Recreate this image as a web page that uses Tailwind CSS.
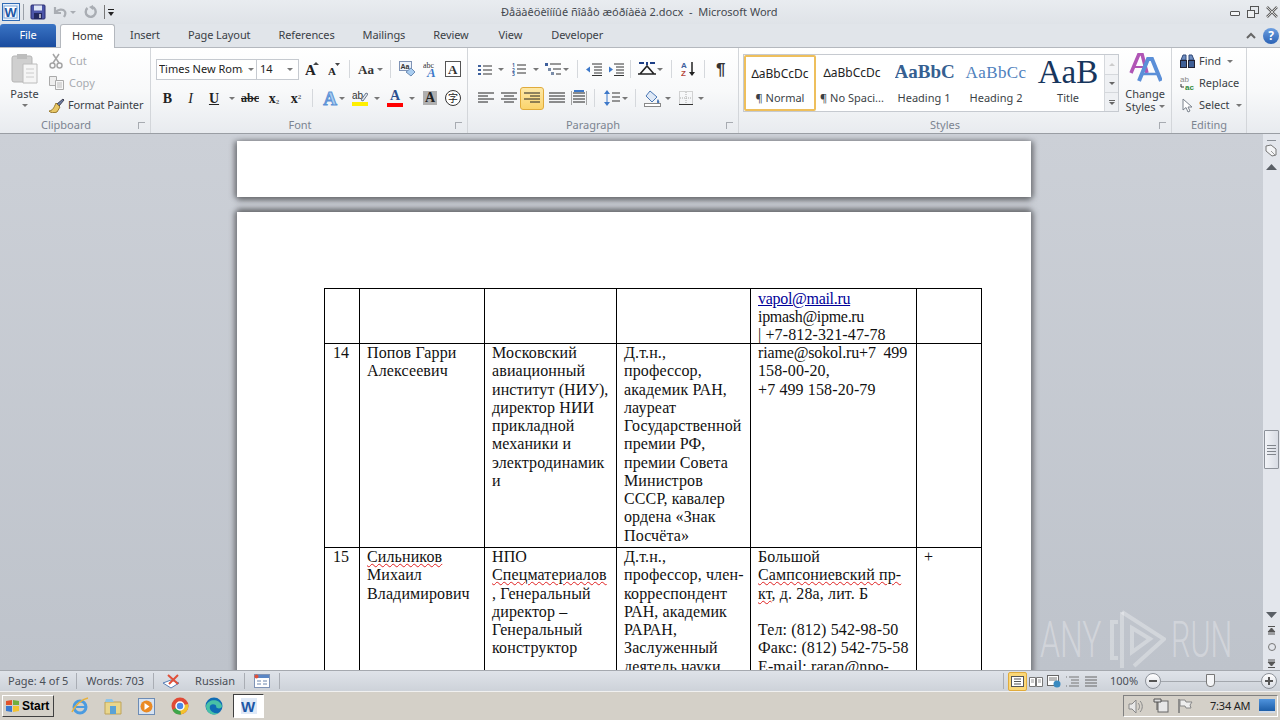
<!DOCTYPE html>
<html lang="ru">
<head>
<meta charset="UTF-8">
<title>Microsoft Word</title>
<script src="https://cdn.jsdelivr.net/npm/@tailwindcss/browser@4"></script>
</head>
<body class="w-[1280px] h-[720px] overflow-hidden bg-[#d4d0c8] font-['Noto_Sans',sans-serif] text-[11px] text-[#3b3f46] relative">

<!-- title bar -->
<div class="h-[24px] flex items-center bg-gradient-to-b from-[#e9ecf0] to-[#dfe3e8] relative">
  <svg class="ml-[2px]" width="18" height="18" viewBox="0 0 18 18"><rect x=".5" y=".5" width="17" height="17" fill="#e8f1fb" stroke="#2f6bb5"/><rect x="2" y="3" width="13" height="12" fill="#fff" stroke="#7aa5d8"/><text x="2.5" y="14" font-family="Liberation Sans" font-size="13" font-weight="700" fill="#1d57a6">W</text></svg>
  <div class="w-px h-[16px] bg-[#9aa0a8] ml-[3px]"></div>
  <svg class="ml-[6px]" width="16" height="16" viewBox="0 0 16 16"><rect x="1" y="1" width="14" height="14" rx="1" fill="#4c55a8" stroke="#2c2f70"/><rect x="4" y="1.5" width="8" height="5" fill="#dfe6f5"/><rect x="4" y="9" width="8" height="6" fill="#23285e"/><rect x="9" y="10" width="2" height="4" fill="#aab"/></svg>
  <svg class="ml-[6px]" width="16" height="14" viewBox="0 0 16 14"><path d="M3 2v6h6M3.5 7.500C6 4 11 3.500 13 6.500c1 2 0 4-1 5.500" fill="none" stroke="#a9adb3" stroke-width="2.200"/></svg>
  <span class="ml-[2px] w-0 h-0 border-x-[3px] border-x-transparent border-t-[3px] border-t-[#a9adb3]"></span>
  <svg class="ml-[8px]" width="14" height="14" viewBox="0 0 14 14"><path d="M3.500 3A5 5 0 1 0 8 2" fill="none" stroke="#a9adb3" stroke-width="2.400"/><path d="M9 0v5L5 2z" fill="#a9adb3"/></svg>
  <div class="w-px h-[14px] bg-[#777] ml-[6px]"></div>
  <div class="ml-[3px] flex flex-col items-center gap-[2px]"><span class="w-[6px] h-px bg-[#222]"></span><span class="w-0 h-0 border-x-[3px] border-x-transparent border-t-[4px] border-t-[#222]"></span></div>
  <div class="absolute left-[501px] top-[4px] text-[11px] text-[#44484f] whitespace-pre">Ðåäàêöèîííûé ñîâåò æóðíàëà 2.docx  -  Microsoft Word</div>
  <div class="ml-auto mr-[2px] flex items-center gap-[7px]">
    <span class="w-[10px] h-[5px] mt-[3px] border border-[#555] rounded-[1px] bg-white/60"></span>
    <svg width="12" height="12" viewBox="0 0 12 12"><rect x="3.500" y=".5" width="8" height="7" fill="none" stroke="#555"/><rect x=".5" y="4.500" width="7" height="7" fill="#eef0f2" stroke="#555"/></svg>
    <svg width="12" height="12" viewBox="0 0 12 12"><path d="M1 1l10 10M11 1L1 11" stroke="#666" stroke-width="2.500"/><path d="M1 1l10 10M11 1L1 11" stroke="#eee" stroke-width=".8"/></svg>
  </div>
</div>

<!-- tabs -->
<div class="h-[24px] flex items-end bg-[#e1e5ea] border-b border-[#b4b8be] text-[11px] tracking-[-0.1px] relative">
  <div class="w-[56px] h-[23px] bg-gradient-to-b from-[#3a74c4] to-[#1a4c9f] rounded-t-[3px] text-white flex items-center justify-center">File</div>
  <div class="ml-[4px] w-[55px] h-[24px] -mb-px bg-white border border-b-0 border-[#b4b8be] rounded-t-[3px] flex items-center justify-center text-[#333]">Home</div>
  <div class="ml-[15px] h-[23px] flex items-center">Insert</div>
  <div class="ml-[28px] h-[23px] flex items-center">Page Layout</div>
  <div class="ml-[28px] h-[23px] flex items-center">References</div>
  <div class="ml-[28px] h-[23px] flex items-center">Mailings</div>
  <div class="ml-[28px] h-[23px] flex items-center">Review</div>
  <div class="ml-[30px] h-[23px] flex items-center">View</div>
  <div class="ml-[29px] h-[23px] flex items-center">Developer</div>
  <div class="ml-auto mr-[1px] h-[23px] flex items-center gap-[7px]">
    <svg width="10" height="8" viewBox="0 0 10 8"><path d="M1 6l4-4 4 4" fill="none" stroke="#666" stroke-width="2"/></svg>
    <span class="w-[16px] h-[16px] rounded-full bg-gradient-to-b from-[#6d9fe0] to-[#2a62b5] text-white text-[12px] font-bold flex items-center justify-center">?</span>
  </div>
</div>

<!-- ribbon -->
<div class="h-[86px] flex bg-gradient-to-b from-white via-[#f8f9fa] to-[#e8ebef] border-b border-[#9a9ea4] shadow-[0_1px_2px_#888]">

  <!-- clipboard -->
  <div class="w-[151px] shrink-0 border-r border-[#d3d6da] flex flex-col">
    <div class="h-[70px] flex">
      <div class="w-[49px] flex flex-col items-center pt-[5px]">
        <svg width="28" height="31" viewBox="0 0 28 31"><rect x="1" y="3" width="20" height="26" rx="2" fill="#cfcfcf" stroke="#b5b5b5"/><rect x="6" y="1" width="10" height="5" fill="#bdbdbd"/><path d="M12 11h14v19H12z" fill="#f5f5f5" stroke="#bcbcbc"/><path d="M15 16h8M15 20h8M15 24h8" stroke="#ccc"/></svg>
        <span class="mt-[3px] leading-[14px]">Paste</span>
        <span class="mt-[3px] w-0 h-0 border-x-[3px] border-x-transparent border-t-[3px] border-t-[#777]"></span>
      </div>
      <div class="flex flex-col pt-[2px]">
        <div class="h-[22px] flex items-center gap-[6px] text-[#a8abb0]"><svg width="14" height="16" viewBox="0 0 14 16"><path d="M4 1l6 9M10 1L4 10" stroke="#a5a5a5" stroke-width="1.500"/><circle cx="3.500" cy="12.500" r="2.500" fill="none" stroke="#a5a5a5" stroke-width="1.500"/><circle cx="10.500" cy="12.500" r="2.500" fill="none" stroke="#a5a5a5" stroke-width="1.500"/></svg>Cut</div>
        <div class="h-[22px] flex items-center gap-[5px] text-[#a8abb0]"><svg width="15" height="14" viewBox="0 0 15 14"><path d="M.5.5h7v9h-7z" fill="#eee" stroke="#aaa"/><path d="M6.500 4.500h8v9h-8z" fill="#f7f7f7" stroke="#aaa"/><path d="M8 7h5M8 9h5M8 11h5" stroke="#bbb"/></svg>Copy</div>
        <div class="h-[22px] flex items-center gap-[3px] -ml-[1px] tracking-[-0.15px]"><svg width="17" height="15" viewBox="0 0 17 15"><path d="M9 6L15 1l1 1-5 6z" fill="#6c7fa8" stroke="#445"/><path d="M8 5l4 4-3 5c-2 1-7 1-8-1 3 0 5-3 7-8z" fill="#e8c766" stroke="#97782c"/></svg>Format Painter</div>
      </div>
    </div>
    <div class="flex-1 flex items-center justify-center pr-[18px] relative text-[#7b8490]">Clipboard<span class="absolute right-[5px] top-[5px] w-[7px] h-[7px] border-l border-b border-[#a7abb1] rotate-90"></span></div>
  </div>

  <!-- font -->
  <div class="w-[317px] shrink-0 border-r border-[#d3d6da] flex flex-col">
    <div class="h-[70px] pl-[5px] pt-[10px] flex flex-col">
      <div class="h-[22px] flex items-center">
        <div class="w-[101px] h-[21px] bg-white border border-[#c6cad0] flex items-center pl-[2px] overflow-hidden"><span class="w-[84px] overflow-hidden whitespace-nowrap text-[#222]">Times New Roman</span><span class="ml-[5px] w-0 h-0 border-x-[3px] border-x-transparent border-t-[3px] border-t-[#777]"></span></div>
        <div class="w-[43px] h-[21px] -ml-px bg-white border border-[#c6cad0] flex items-center pl-[3px] text-[#222]">14<span class="ml-auto mr-[5px] w-0 h-0 border-x-[3px] border-x-transparent border-t-[3px] border-t-[#777]"></span></div>
        <svg class="ml-[6px]" width="14" height="14" viewBox="0 0 14 14"><text x="0" y="13" font-family="Liberation Serif" font-size="15" font-weight="700" fill="#222">A</text><path d="M11 0l3 3H8z" fill="#444"/></svg>
        <svg class="ml-[9px]" width="12" height="13" viewBox="0 0 12 13"><text x="0" y="12" font-family="Liberation Serif" font-size="11" font-weight="700" fill="#222">A</text><path d="M9.500 3L12 0H7z" fill="#444"/></svg>
        <span class="ml-[9px] w-px h-[18px] bg-[#d5d8dc]"></span>
        <span class="ml-[8px] w-[15px] font-['Liberation_Serif'] font-bold text-[13px] leading-none text-[#333]">Aa</span>
        <span class="w-0 h-0 ml-[4px] border-x-[3px] border-x-transparent border-t-[3px] border-t-[#777]"></span>
        <span class="ml-[7px] w-px h-[18px] bg-[#d5d8dc]"></span>
        <svg class="ml-[8px]" width="17" height="16" viewBox="0 0 17 16"><rect x=".5" y=".5" width="12" height="9" fill="#eef3fa" stroke="#7f93b5"/><text x="1.500" y="8" font-family="Liberation Sans" font-size="7" font-weight="700" fill="#333">Aa</text><path d="M7 11l5-4 4 4-4 4z" fill="#a9cdf0" stroke="#6d8cb5"/></svg>
        <svg class="ml-[7px]" width="18" height="18" viewBox="0 0 18 18"><text x="0" y="8" font-family="Liberation Serif" font-size="8" fill="#333">abc</text><text x="4" y="17" font-family="Liberation Serif" font-size="13" font-weight="700" font-style="italic" fill="#3d78c9">A</text></svg>
        <svg class="ml-[4px]" width="16" height="16" viewBox="0 0 16 16"><rect x=".5" y=".5" width="15" height="15" fill="#fff" stroke="#555"/><text x="3" y="13" font-family="Liberation Serif" font-size="13" font-weight="700" fill="#333">A</text></svg>
      </div>
      <div class="h-[22px] mt-[7px] flex items-center font-['Liberation_Serif'] text-[14px] text-[#222]">
        <span class="w-[23px] text-center font-bold">B</span>
        <span class="w-[23px] text-center italic">I</span>
        <span class="w-[24px] text-center font-bold underline">U</span>
        <span class="w-0 h-0 ml-[3px] border-x-[3px] border-x-transparent border-t-[3px] border-t-[#777]"></span>
        <span class="ml-[4px] w-[22px] text-center text-[12px] font-bold line-through">abc</span>
        <span class="ml-[2px] w-[22px] text-center font-bold">x<sub class="text-[7px] text-[#666]">2</sub></span>
        <span class="w-[22px] text-center font-bold">x<sup class="text-[7px] text-[#666]">2</sup></span>
        <span class="ml-[5px] w-px h-[18px] bg-[#d5d8dc]"></span>
        <span class="ml-[9px] w-[16px] text-center font-bold text-[19px] leading-none text-[#a8cdf0] [-webkit-text-stroke:1px_#5c92d6]">A</span>
        <span class="w-0 h-0 ml-[1px] border-x-[3px] border-x-transparent border-t-[3px] border-t-[#777]"></span>
        <svg class="ml-[7px]" width="16" height="16" viewBox="0 0 16 16"><text x="0" y="9" font-family="Liberation Sans" font-size="10" fill="#333">ab</text><path d="M9 10l5-7 2 1-5 7z" fill="#dfe6f0" stroke="#6d7a8c"/><rect x="0" y="12" width="16" height="4" fill="#ffef00"/></svg>
        <span class="w-0 h-0 ml-[6px] border-x-[3px] border-x-transparent border-t-[3px] border-t-[#777]"></span>
        <div class="ml-[7px] w-[16px] flex flex-col items-center"><span class="text-[14px] leading-[12px] font-bold text-[#2c4f8f]">A</span><span class="w-[16px] h-[4px] bg-[#f00] mt-[1px]"></span></div>
        <span class="w-0 h-0 ml-[6px] border-x-[3px] border-x-transparent border-t-[3px] border-t-[#777]"></span>
        <span class="ml-[8px] w-[14px] h-[14px] bg-[#b0b0b0] text-center font-bold leading-[14px]">A</span>
        <span class="ml-[8px] w-[16px] h-[16px] rounded-full border border-[#333] bg-white flex items-center justify-center text-[10px] leading-none font-['Noto_Sans_CJK_SC',sans-serif]">字</span>
      </div>
    </div>
    <div class="flex-1 flex items-center justify-center pr-[18px] relative text-[#7b8490]">Font<span class="absolute right-[5px] top-[5px] w-[7px] h-[7px] border-l border-b border-[#a7abb1] rotate-90"></span></div>
  </div>

  <!-- paragraph -->
  <div class="w-[271px] shrink-0 border-r border-[#d3d6da] flex flex-col">
    <div class="h-[70px] pl-[10px] pt-[10px] flex flex-col">
      <div class="h-[22px] flex items-center">
        <svg width="14" height="13" viewBox="0 0 14 13"><path d="M0 2h3v2H0zM0 6h3v2H0zM0 10h3v2H0z" fill="#3d5f9c"/><path d="M5 3h9M5 7h9M5 11h9" stroke="#333"/></svg>
        <span class="ml-[6px] w-0 h-0 border-x-[3px] border-x-transparent border-t-[3px] border-t-[#777]"></span>
        <svg class="ml-[8px]" width="14" height="14" viewBox="0 0 14 14"><text x="0" y="5" font-size="5" font-weight="700" fill="#3d5f9c">1</text><text x="0" y="9.500" font-size="5" font-weight="700" fill="#3d5f9c">2</text><text x="0" y="14" font-size="5" font-weight="700" fill="#3d5f9c">3</text><path d="M5 3h9M5 7h9M5 11h9" stroke="#333"/></svg>
        <span class="ml-[7px] w-0 h-0 border-x-[3px] border-x-transparent border-t-[3px] border-t-[#777]"></span>
        <svg class="ml-[6px]" width="16" height="14" viewBox="0 0 16 14"><path d="M0 1h3v3H0z" fill="#3d5f9c"/><path d="M3 6h3v3H3zM6 10h3v3H6z" fill="#7a8ca8"/><path d="M5 2h11M8 7h8M11 12h5" stroke="#333"/></svg>
        <span class="ml-[2px] w-0 h-0 border-x-[3px] border-x-transparent border-t-[3px] border-t-[#777]"></span>
        <span class="ml-[8px] w-px h-[18px] bg-[#d5d8dc]"></span>
        <svg class="ml-[8px]" width="16" height="13" viewBox="0 0 16 13"><path d="M6 1h10M8 4h8M8 7h8M8 10h8M6 12.500h10" stroke="#333"/><path d="M0 6.500l4-3v6z" fill="#3d78c9"/></svg>
        <svg class="ml-[6px]" width="16" height="13" viewBox="0 0 16 13"><path d="M6 1h10M8 4h8M8 7h8M8 10h8M6 12.500h10" stroke="#333"/><path d="M5 6.500l-4-3v6z" fill="#3d78c9"/></svg>
        <span class="ml-[6px] w-px h-[18px] bg-[#d5d8dc]"></span>
        <svg class="ml-[7px]" width="18" height="14" viewBox="0 0 18 14"><path d="M2 12L9 4l7 8M0 12h18" fill="none" stroke="#222" stroke-width="1.600"/><path d="M1 1h5M12 1h5M9 0v3" stroke="#1d3f86" stroke-width="2"/></svg>
        <span class="ml-[1px] w-0 h-0 border-x-[3px] border-x-transparent border-t-[3px] border-t-[#777]"></span>
        <span class="ml-[8px] w-px h-[18px] bg-[#d5d8dc]"></span>
        <svg class="ml-[9px]" width="15" height="16" viewBox="0 0 15 16"><text x="0" y="7" font-family="Liberation Sans" font-size="8" font-weight="700" fill="#3d5f9c">A</text><text x="0" y="15" font-family="Liberation Sans" font-size="8" font-weight="700" fill="#b5473c">Z</text><path d="M11 1v12" stroke="#222" stroke-width="1.500"/><path d="M8 11h6l-3 4z" fill="#222"/></svg>
        <span class="ml-[8px] w-px h-[18px] bg-[#d5d8dc]"></span>
        <span class="ml-[11px] font-['Liberation_Sans'] font-bold text-[17px] leading-none text-[#333]">¶</span>
      </div>
      <div class="h-[22px] mt-[7px] flex items-center">
        <svg width="16" height="12" viewBox="0 0 16 12"><path d="M0 1h16M0 4h10M0 7h16M0 10h10" stroke="#222"/></svg>
        <svg class="ml-[7px]" width="16" height="12" viewBox="0 0 16 12"><path d="M0 1h16M3 4h10M0 7h16M3 10h10" stroke="#222"/></svg>
        <div class="ml-[3px] w-[24px] h-[23px] rounded-[3px] border border-[#e0ab3c] bg-gradient-to-b from-[#fde8a6] to-[#fbd46c] flex items-center justify-center"><svg width="16" height="12" viewBox="0 0 16 12"><path d="M0 1h16M6 4h10M0 7h16M6 10h10" stroke="#222"/></svg></div>
        <svg class="ml-[5px]" width="16" height="12" viewBox="0 0 16 12"><path d="M0 1h16M0 4h16M0 7h16M0 10h16" stroke="#222"/></svg>
        <svg class="ml-[6px]" width="16" height="16" viewBox="0 0 16 16"><path d="M0 1v14M16 1v14" stroke="#555"/><path d="M2 3h12M2 6h12M2 9h12M2 12h12" stroke="#222"/><path d="M3 1h10" stroke="#3d78c9" stroke-width="2"/></svg>
        <span class="ml-[7px] w-px h-[18px] bg-[#d5d8dc]"></span>
        <svg class="ml-[9px]" width="16" height="16" viewBox="0 0 16 16"><path d="M3 0l3 4H0zM3 16l3-4H0z" fill="#3d78c9"/><path d="M3 3v10" stroke="#3d78c9"/><path d="M8 3h8M8 7h8M8 11h8" stroke="#333"/></svg>
        <span class="ml-[2px] w-0 h-0 border-x-[3px] border-x-transparent border-t-[3px] border-t-[#777]"></span>
        <span class="ml-[7px] w-px h-[18px] bg-[#d5d8dc]"></span>
        <svg class="ml-[8px]" width="17" height="17" viewBox="0 0 17 17"><path d="M6 1l7 6-5 5-6-6z" fill="#dfe9f6" stroke="#4b78b5"/><path d="M14 9c1 2 2 3 1 4s-2 0-2-1 0-2 1-3z" fill="#4b78b5"/><rect x=".5" y="13.500" width="16" height="3" fill="#fff" stroke="#888"/></svg>
        <span class="ml-[4px] w-0 h-0 border-x-[3px] border-x-transparent border-t-[3px] border-t-[#777]"></span>
        <svg class="ml-[8px]" width="14" height="14" viewBox="0 0 14 14"><rect x=".5" y=".5" width="13" height="13" fill="none" stroke="#aaa" stroke-dasharray="1 1"/><path d="M7 1v12M1 7h12" stroke="#aaa" stroke-dasharray="1 1"/><path d="M0 13.500h14" stroke="#333"/></svg>
        <span class="ml-[5px] w-0 h-0 border-x-[3px] border-x-transparent border-t-[3px] border-t-[#777]"></span>
      </div>
    </div>
    <div class="flex-1 flex items-center justify-center pr-[20px] relative text-[#7b8490]">Paragraph<span class="absolute right-[5px] top-[5px] w-[7px] h-[7px] border-l border-b border-[#a7abb1] rotate-90"></span></div>
  </div>

  <!-- styles -->
  <div class="w-[433px] shrink-0 border-r border-[#d3d6da] flex flex-col">
    <div class="h-[70px] pl-[4px] pt-[6px] flex">
      <div class="w-[377px] h-[58px] bg-white border border-[#c6cad0] flex relative">
        <div class="w-[72px] h-[56px] shrink-0 border-2 border-[#eebf5c] rounded-[2px] flex flex-col items-center overflow-hidden">
          <span class="h-[33px] flex items-center whitespace-nowrap text-[12px] text-[#222]">∆aBbCcDc</span>
          <span class="text-[11px]">¶ Normal</span>
        </div>
        <div class="w-[72px] h-[56px] shrink-0 flex flex-col items-center overflow-hidden">
          <span class="h-[35px] flex items-center whitespace-nowrap text-[12px] text-[#222]">∆aBbCcDc</span>
          <span class="text-[11px] whitespace-nowrap">¶ No Spaci...</span>
        </div>
        <div class="w-[72px] h-[56px] shrink-0 flex flex-col items-center overflow-hidden">
          <span class="w-[59px] h-[35px] flex items-center overflow-hidden whitespace-nowrap font-['Liberation_Serif'] font-bold text-[19px] text-[#365f91]">AaBbCc</span>
          <span class="text-[11px]">Heading 1</span>
        </div>
        <div class="w-[72px] h-[56px] shrink-0 flex flex-col items-center overflow-hidden">
          <span class="h-[35px] flex items-center whitespace-nowrap font-['Liberation_Serif'] text-[17px] tracking-[0.4px] text-[#4f81bd]">AaBbCc</span>
          <span class="text-[11px]">Heading 2</span>
        </div>
        <div class="w-[72px] h-[56px] shrink-0 flex flex-col items-center overflow-hidden">
          <span class="h-[35px] flex items-center whitespace-nowrap font-['Liberation_Serif'] text-[33px] leading-none text-[#17365d]">AaB</span>
          <span class="text-[11px]">Title</span>
        </div>
        <div class="absolute right-0 top-0 bottom-0 w-[14px] flex flex-col border-l border-[#d5d8dc] text-[#777]">
          <div class="h-[19px] bg-[#f4f5f7] flex items-center justify-center"><span class="w-0 h-0 border-x-[3px] border-x-transparent border-b-[3px] border-b-[#ccc]"></span></div>
          <div class="h-[19px] border-y border-[#d5d8dc] bg-[#eef0f3] flex items-center justify-center"><span class="w-0 h-0 border-x-[3px] border-x-transparent border-t-[3px] border-t-[#666]"></span></div>
          <div class="flex-1 bg-[#eef0f3] flex flex-col items-center justify-center gap-px"><span class="w-[6px] h-px bg-[#666]"></span><span class="w-0 h-0 border-x-[3px] border-x-transparent border-t-[3px] border-t-[#666]"></span></div>
        </div>
      </div>
      <div class="w-[52px] flex flex-col items-center">
        <svg class="mt-[-1px]" width="34" height="30" viewBox="0 0 34 30"><path d="M3 20L11 1h3l5 19" fill="none" stroke="#b055b5" stroke-width="3.500"/><path d="M5 14h11" stroke="#b055b5" stroke-width="2"/><path d="M11 28L20 6h4l9 22" fill="none" stroke="#5b8fd8" stroke-width="4"/><path d="M14 21h16" stroke="#5b8fd8" stroke-width="2.500"/></svg>
        <span class="mt-[4px] leading-[13px]">Change</span>
        <span class="leading-[13px] flex items-center gap-[3px]">Styles<span class="w-0 h-0 border-x-[3px] border-x-transparent border-t-[3px] border-t-[#777]"></span></span>
      </div>
    </div>
    <div class="flex-1 flex items-center justify-center pr-[20px] relative text-[#7b8490]">Styles<span class="absolute right-[5px] top-[5px] w-[7px] h-[7px] border-l border-b border-[#a7abb1] rotate-90"></span></div>
  </div>

  <!-- editing -->
  <div class="w-[75px] shrink-0 border-r border-[#d3d6da] flex flex-col">
    <div class="h-[70px] pl-[8px] pt-[2px]">
      <div class="h-[22px] flex items-center gap-[4px]"><svg width="15" height="14" viewBox="0 0 15 14"><path d="M1 6l2-5h3v5zM14 6l-2-5H9v5z" fill="#6d8cc0" stroke="#334a78"/><rect x=".5" y="6.500" width="6" height="7" fill="#3f5f96" stroke="#223"/><rect x="8.500" y="6.500" width="6" height="7" fill="#3f5f96" stroke="#223"/></svg>Find<span class="ml-[2px] w-0 h-0 border-x-[3px] border-x-transparent border-t-[3px] border-t-[#777]"></span></div>
      <div class="h-[22px] flex items-center gap-[3px]"><svg width="16" height="16" viewBox="0 0 16 16"><text x="0" y="7" font-family="Liberation Sans" font-size="8" fill="#888">ab</text><text x="5" y="15" font-family="Liberation Sans" font-size="8" font-weight="700" fill="#2f8a3b">ac</text><path d="M1 9v3h3" fill="none" stroke="#333"/></svg>Replace</div>
      <div class="h-[22px] flex items-center gap-[4px]"><svg class="ml-[2px]" width="13" height="15" viewBox="0 0 13 15"><path d="M1 1v11l3-2.500 2 4.500 2-1-2-4h4z" fill="#fff" stroke="#7a828c"/></svg>Select<span class="ml-[2px] w-0 h-0 border-x-[3px] border-x-transparent border-t-[3px] border-t-[#777]"></span></div>
    </div>
    <div class="flex-1 flex items-center justify-center text-[#7b8490]">Editing</div>
  </div>
</div>

<!-- document area -->
<div class="h-[536px] flex bg-gradient-to-b from-[#ccd0d7] to-[#bec3cb]">
  <div class="flex-1 flex flex-col pl-[237px] pt-[7px] overflow-hidden">
    <div class="w-[794px] h-[56px] shrink-0 bg-white shadow-[0_3px_6px_#6c6e72,3px_0_5px_#8e9197,-3px_0_5px_#8e9197]"></div>
    <div class="w-[794px] flex-1 mt-[15px] pt-[76px] pl-[87px] bg-white shadow-[0_-3px_6px_#6c6e72,3px_0_5px_#8e9197,-3px_0_5px_#8e9197] font-['Liberation_Serif',serif] text-[16px] leading-[18.25px] text-[#111] tracking-[0.12px]">
      <table class="table-fixed border-collapse w-[657px]">
        <colgroup><col class="w-[35px]"><col class="w-[125px]"><col class="w-[132px]"><col class="w-[134px]"><col class="w-[166px]"><col class="w-[65px]"></colgroup>
        <tr class="align-top">
          <td class="border border-black"></td>
          <td class="border border-black"></td>
          <td class="border border-black"></td>
          <td class="border border-black"></td>
          <td class="border border-black pl-[7px] whitespace-nowrap"><div class="h-[54px] pt-[1px] leading-[18px]"><span class="text-[#000099] underline tracking-[-0.3px]">vapol@mail.ru</span><br><span class="tracking-[-0.3px]">ipmash@ipme.ru</span><br>| +7-812-321-47-78</div></td>
          <td class="border border-black"></td>
        </tr>
        <tr class="h-[204px] align-top">
          <td class="border border-black pl-[8px]">14</td>
          <td class="border border-black pl-[7px] whitespace-nowrap">Попов Гарри<br>Алексеевич</td>
          <td class="border border-black pl-[7px] whitespace-nowrap">Московский<br>авиационный<br>институт (НИУ),<br>директор НИИ<br>прикладной<br>механики и<br>электродинамик<br>и</td>
          <td class="border border-black pl-[7px] whitespace-nowrap">Д.т.н.,<br>профессор,<br>академик РАН,<br>лауреат<br>Государственной<br>премии РФ,<br>премии Совета<br>Министров<br>СССР, кавалер<br>ордена «Знак<br>Посчёта»</td>
          <td class="border border-black pl-[7px] whitespace-nowrap"><span class="tracking-[-0.15px]">riame@sokol.ru+7&nbsp; 499</span><br>158-00-20,<br>+7 499 158-20-79</td>
          <td class="border border-black"></td>
        </tr>
        <tr class="h-[200px] align-top">
          <td class="border border-black pl-[8px]">15</td>
          <td class="border border-black pl-[7px] whitespace-nowrap"><span class="underline decoration-wavy decoration-[#e02020] decoration-1">Сильников</span><br>Михаил<br>Владимирович</td>
          <td class="border border-black pl-[7px] whitespace-nowrap">НПО<br><span class="underline decoration-wavy decoration-[#e02020] decoration-1">Спецматериалов</span><br>, Генеральный<br>директор –<br>Генеральный<br>конструктор</td>
          <td class="border border-black pl-[7px] whitespace-nowrap">Д.т.н.,<br>профессор, член-<br>корреспондент<br>РАН, академик<br>РАРАН,<br>Заслуженный<br>деятель науки</td>
          <td class="border border-black pl-[7px] whitespace-nowrap">Большой<br><span class="underline decoration-wavy decoration-[#e02020] decoration-1">Сампсониевский пр-</span><br><span class="underline decoration-wavy decoration-[#e02020] decoration-1">кт</span>, д. 28а, лит. Б<br><br>Тел: (812) 542-98-50<br>Факс: (812) 542-75-58<br>E-mail: raran@npo-</td>
          <td class="border border-black pl-[7px]">+</td>
        </tr>
      </table>
    </div>
  </div>
  <!-- scrollbar -->
  <div class="w-[17px] shrink-0 bg-[#e3e6ec] flex flex-col items-center">
    <span class="mt-[6px] w-[9px] h-[1px] bg-[#8a8f96]"></span>
    <svg class="mt-[3px]" width="13" height="13" viewBox="0 0 13 13"><path d="M1 2l5-1 5 4v6l-4 1-6-5z" fill="#f3f4f6" stroke="#777"/><path d="M6 7l4 4" stroke="#999"/></svg>
    <svg class="mt-[7px]" width="11" height="6" viewBox="0 0 11 6"><path d="M5.500 0L11 6H0z" fill="#5a5f66"/></svg>
    <div class="mt-[260px] w-[15px] h-[39px] border border-[#8d929a] rounded-[1px] bg-gradient-to-r from-[#f2f4f8] to-[#d8dce4] flex flex-col items-center justify-center gap-[2px]"><span class="w-[9px] h-px bg-[#80858c]"></span><span class="w-[9px] h-px bg-[#80858c]"></span><span class="w-[9px] h-px bg-[#80858c]"></span><span class="w-[9px] h-px bg-[#80858c]"></span></div>
    <svg class="mt-[143px]" width="11" height="6" viewBox="0 0 11 6"><path d="M5.500 6L11 0H0z" fill="#5a5f66"/></svg>
    <svg class="mt-[8px]" width="9" height="9" viewBox="0 0 9 9"><path d="M1 .5h7M4.500 2L8 6H1zM1 8h7" fill="#555" stroke="#555"/></svg>
    <span class="mt-[8px] w-[8px] h-[8px] rounded-full border border-[#777]"></span>
    <svg class="mt-[8px]" width="9" height="9" viewBox="0 0 9 9"><path d="M1 1h7M4.500 7L8 3H1zM1 8.500h7" fill="#555" stroke="#555"/></svg>
  </div>
</div>

<!-- status bar -->
<div class="h-[22px] flex items-center bg-gradient-to-b from-[#dfe3e9] to-[#cdd2d9] border-t border-[#a5a9af] border-b border-b-[#f0f0f0] text-[11px] text-[#4a4f57]">
  <span class="ml-[8px]">Page: 4 of 5</span>
  <span class="ml-[8px] w-px h-[16px] bg-[#a9adb4]"></span>
  <span class="ml-[9px]">Words: 703</span>
  <span class="ml-[9px] w-px h-[16px] bg-[#a9adb4]"></span>
  <svg class="ml-[8px]" width="18" height="15" viewBox="0 0 18 15"><path d="M1 9l8-3 8 3-8 5z" fill="#fff" stroke="#5a7fb5"/><path d="M6 1l10 9M16 1L7 10" stroke="#e0503a" stroke-width="2"/></svg>
  <span class="ml-[15px]">Russian</span>
  <span class="ml-[9px] w-px h-[16px] bg-[#a9adb4]"></span>
  <svg class="ml-[9px]" width="16" height="14" viewBox="0 0 16 14"><rect x=".5" y=".5" width="15" height="13" fill="#fff" stroke="#7f93b5"/><rect x="1" y="1" width="14" height="3" fill="#5a86c5"/><path d="M3 7h4M3 10h4M9 7h4M9 10h4" stroke="#6d86ad"/><circle cx="2.500" cy="2.500" r="2" fill="#e0503a"/></svg>
  <span class="ml-[9px] w-px h-[16px] bg-[#a9adb4]"></span>
  <div class="ml-auto flex items-center">
    <span class="w-px h-[16px] bg-[#a9adb4] mr-[4px]"></span>
    <div class="w-[19px] h-[19px] rounded-[2px] border border-[#e0ab3c] bg-[#fbd878] flex items-center justify-center"><svg width="13" height="11" viewBox="0 0 13 11"><rect x=".5" y=".5" width="12" height="10" fill="#fff" stroke="#555"/><path d="M3 3h7M3 5.500h7M3 8h7" stroke="#555"/></svg></div>
    <svg class="ml-[2px]" width="14" height="11" viewBox="0 0 14 11"><path d="M.5 1.500h6v9h-6zM7.500 1.500h6v9h-6z" fill="#fff" stroke="#777"/><path d="M2 4h3M2 6h3M9 4h3M9 6h3" stroke="#999"/></svg>
    <svg class="ml-[4px]" width="14" height="13" viewBox="0 0 14 13"><rect x=".5" y=".5" width="11" height="10" fill="#fff" stroke="#666"/><path d="M2 3h8M2 5h8" stroke="#777"/><circle cx="10" cy="9" r="3.500" fill="#3a8ac0"/></svg>
    <svg class="ml-[5px]" width="13" height="11" viewBox="0 0 13 11"><path d="M3 1h10M5 4h8M5 7h8M3 10h10" stroke="#777"/><path d="M0 1h1M0 10h1" stroke="#777"/></svg>
    <svg class="ml-[6px]" width="12" height="11" viewBox="0 0 12 11"><path d="M0 1h12M0 4h12M0 7h12M0 10h12" stroke="#666"/></svg>
    <span class="ml-[13px] w-[27px]">100%</span>
    <span class="ml-[8px] w-[16px] h-[16px] rounded-full border border-[#8d929a] bg-gradient-to-b from-white to-[#d8dce3] flex items-center justify-center"><span class="w-[8px] h-[2px] bg-[#555]"></span></span>
    <div class="w-[100px] h-[16px] flex items-center relative"><span class="w-full h-px bg-[#a3a7ad]"></span><span class="absolute left-[45px] top-[1px] w-[9px] h-[13px] bg-[#f4f5f7] border border-[#777] rounded-b-[4px]"></span></div>
    <span class="w-[16px] h-[16px] mr-[3px] rounded-full border border-[#8d929a] bg-gradient-to-b from-white to-[#d8dce3] flex items-center justify-center relative"><span class="w-[8px] h-[2px] bg-[#555]"></span><span class="absolute w-[2px] h-[8px] bg-[#555]"></span></span>
  </div>
</div>

<!-- taskbar -->
<div class="h-[28px] flex items-center bg-[#d4d0c8]">
  <div class="ml-[2px] w-[52px] h-[22px] bg-[#d4d0c8] border border-[#fff] border-r-[#404040] border-b-[#404040] flex items-center gap-[2px] pl-[2px] font-['Liberation_Sans'] font-bold text-[12px] text-black"><svg width="15" height="14" viewBox="0 0 15 14"><path d="M1 2l6-1v5H1z" fill="#e0532c"/><path d="M8 1l6 1v4H8z" fill="#6fae3f"/><path d="M1 7h6v6l-6-1z" fill="#3a7ad0"/><path d="M8 7h6v5l-6 1z" fill="#f2c230"/></svg>Start</div>
  <svg class="ml-[17px]" width="18" height="18" viewBox="0 0 18 18"><circle cx="9" cy="10" r="6" fill="none" stroke="#4b9be0" stroke-width="3"/><path d="M5 10h9" stroke="#4b9be0" stroke-width="2"/><path d="M1 15C4 8 11 2 17 1" fill="none" stroke="#e8b13a" stroke-width="1.500"/></svg>
  <svg class="ml-[15px]" width="18" height="17" viewBox="0 0 18 17"><path d="M1 4h16v12H1z" fill="#e9d68c" stroke="#bda35a"/><path d="M2 1h6l2 3H1z" fill="#8fc4e8"/><rect x="6" y="8" width="6" height="8" fill="#5aa2d6"/></svg>
  <svg class="ml-[16px]" width="17" height="17" viewBox="0 0 17 17"><rect x=".5" y=".5" width="16" height="16" fill="#d7e3f2" stroke="#6d8cb5"/><circle cx="8.500" cy="8.500" r="6" fill="#ea8a24"/><path d="M6.500 5l5 3.500-5 3.500z" fill="#fff"/></svg>
  <svg class="ml-[16px]" width="18" height="18" viewBox="0 0 18 18"><circle cx="9" cy="9" r="8.500" fill="#e04a36"/><path d="M9 9L1.500 13A8.500 8.500 0 0 0 10 17.500z" fill="#3da64a"/><path d="M9 9l8 -2A8.500 8.500 0 0 1 10 17.500z" fill="#f3c32d"/><circle cx="9" cy="9" r="4" fill="#4a88e8" stroke="#fff" stroke-width="1.500"/></svg>
  <svg class="ml-[16px]" width="18" height="18" viewBox="0 0 18 18"><circle cx="9" cy="9" r="8.500" fill="#0f6cb4"/><path d="M1 9C3 2 14 1 17 9c0 3-5 3-6 1 2-3-8-5-6 2 1 3 5 5 9 4-6 4-13 0-13-7z" fill="#48c1a6"/></svg>
  <div class="ml-[10px] w-[31px] h-[24px] bg-white border border-[#404040] border-r-white border-b-white flex items-center justify-center"><svg width="16" height="16" viewBox="0 0 16 16"><rect width="16" height="16" fill="#dfe9f7"/><text x="0" y="13.500" font-family="Liberation Sans" font-size="15" font-weight="700" fill="#1d57a6">W</text></svg></div>
  <div class="ml-auto mr-[2px] w-[155px] h-[22px] border border-[#808080] border-r-white border-b-white flex items-center text-[#222]">
    <svg class="ml-[4px]" width="16" height="15" viewBox="0 0 16 15"><path d="M1 5h3l4-4v13l-4-4H1z" fill="#e8e8e8" stroke="#888"/><path d="M10 4c2 2 2 5 0 7M12 2c3 3 3 8 0 11" fill="none" stroke="#888"/></svg>
    <svg class="ml-[9px]" width="16" height="16" viewBox="0 0 16 16"><rect x="5" y="3" width="10" height="11" fill="#e8e8e8" stroke="#666"/><path d="M1 1h7v3H1z" fill="#ddd" stroke="#555"/><path d="M4 4v8" stroke="#555"/></svg>
    <svg class="ml-[8px]" width="16" height="16" viewBox="0 0 16 16"><path d="M2 1v14" stroke="#777" stroke-width="1.500"/><path d="M3 2h5l1 2h6l-2 3 1 3H9L8 8H3z" fill="#eee" stroke="#888"/></svg>
    <span class="ml-[17px] text-[11px] tracking-[-0.2px]">7:34 AM</span>
    <span class="ml-auto mr-[2px] w-[16px] h-[14px] bg-gradient-to-b from-[#4f93dd] to-[#1c5ea8] border-b-2 border-[#cfd9e6]"></span>
  </div>
</div>

<!-- watermark -->
<div class="absolute left-[1040px] top-[610px] h-[60px] flex items-center text-white/30 pointer-events-none">
  <span class="w-[70px] font-['Roboto'] font-light text-[50px] leading-none scale-x-[.64] origin-left whitespace-nowrap">ANY</span>
  <svg width="56" height="60" viewBox="0 0 56 60" fill="none" stroke="currentColor" stroke-width="4"><path d="M8 12H2v36h6"/><path d="M12 2v56"/><path d="M12 2l42 27-30 27"/><path d="M22 18l18 11-18 13z"/></svg>
  <span class="ml-[5px] w-[60px] font-['Roboto'] font-light text-[50px] leading-none scale-x-[.61] origin-left whitespace-nowrap">RUN</span>
</div>

</body>
</html>
